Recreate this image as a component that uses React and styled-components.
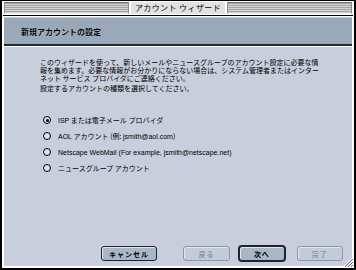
import React from 'react';
import styled, { createGlobalStyle } from 'styled-components';

const GlobalStyle = createGlobalStyle`
    body {
        margin: 0;
        background: #ffffff;
    }
`
const Window = styled.div`
    width: 356px;
    height: 270px;
    box-sizing: border-box;
    border: 2px solid #000000;
    border-top-width: 1px;
    background: #ffffff;
    display: flex;
    flex-direction: column;
    font-family: 'Noto Sans CJK JP', sans-serif;
    position: relative;
`
const TitleBar = styled.div`
    height: 14px;
    margin: 0 1px;
    border-bottom: 1px solid #000000;
    display: flex;
    align-items: center;
    justify-content: center;
    background: #ffffff;
`
const Stripes = styled.div`
    flex: 1;
    height: 10px;
    margin: 0 1px;
    background: repeating-linear-gradient(to bottom, #a4a4a4 0, #a4a4a4 1px, #d4d4d4 1px, #d4d4d4 2px);
    border: 1px solid #8c8c8c;
    border-top-color: #707070;
    border-bottom-color: #f0f0f0;
`
const TitleText = styled.span`
    font-size: 8px;
    line-height: 12px;
    color: #000000;
    background: #e2e2e2;
    padding: 0 4px;
    letter-spacing: 0.4px;
    border-left: 1px solid #ffffff;
    border-right: 1px solid #ffffff;
`
const Inner = styled.div`
    flex: 1;
    display: flex;
    flex-direction: column;
    margin: 1px;
    border: 1px solid #ffffff;
    border-top: none;
`
const Header = styled.div`
    height: 26px;
    background: #99a9ba;
    border-top: 1px solid #b9c9df;
    border-bottom: 2px solid #1f2b3a;
    display: flex;
    align-items: center;
    padding-left: 17px;
    font-size: 8px;
    font-weight: bold;
    color: #000000;
    text-shadow: 0 0 1px #d8e0ea;
`
const Content = styled.div`
    flex: 1;
    background: #c8cedc;
    border-top: 1px solid #ffffff;
    display: flex;
    flex-direction: column;
    padding: 11px 9px 5px 36px;
`
const Paragraph = styled.p`
    margin: ${({ gap }) => gap || 0}px 0 0 0;
    font-size: 7px;
    line-height: 8px;
    color: #000000;
    white-space: nowrap;
`
const RadioList = styled.div`
    margin-top: 20px;
    display: flex;
    flex-direction: column;
`
const RadioRow = styled.label`
    height: 16px;
    display: flex;
    align-items: center;
    font-size: 7px;
    color: #000000;
    white-space: nowrap;
`
const RadioCircle = styled.span`
    width: 8px;
    height: 8px;
    box-sizing: border-box;
    border: 1.5px solid #000000;
    border-radius: 50%;
    margin: 0 7px 0 3px;
    background: #dde2ec;
    display: flex;
    align-items: center;
    justify-content: center;
    &::after {
        content: '';
        width: 3px;
        height: 3px;
        border-radius: 50%;
        background: ${({ checked }) => checked ? '#000000' : 'transparent'};
    }
`
const Latin = styled.span`
    font-family: 'Liberation Sans', sans-serif;
`
const ButtonRow = styled.div`
    margin-top: auto;
    display: flex;
    align-items: center;
    padding-left: 61px;
`
const Button = styled.div`
    width: ${({ w }) => w}px;
    height: 13px;
    margin-left: ${({ ml }) => ml || 0}px;
    border: 1px solid ${({ disabled }) => disabled ? '#8c98a8' : '#1c2230'};
    box-shadow: ${({ primary }) => primary ? '0 0 0 1px #1c2230, inset 1px 1px 0 #dfe6f0' : 'inset 1px 1px 0 #e2e8f1'};
    border-radius: 3px;
    background: ${({ disabled }) => disabled ? '#c3cad8' : '#aab6c6'};
    color: ${({ disabled }) => disabled ? '#8e98a8' : '#000000'};
    font-size: 7px;
    font-weight: bold;
    display: flex;
    align-items: center;
    justify-content: center;
    letter-spacing: 1px;
`
const Grip = styled.svg`
    position: absolute;
    right: 1px;
    bottom: 1px;
`

function App() {
    return (
        <>
            <GlobalStyle />
            <Window>
                <TitleBar>
                    <Stripes />
                    <TitleText>アカウント ウィザード</TitleText>
                    <Stripes />
                </TitleBar>
                <Inner>
                    <Header>新規アカウントの設定</Header>
                    <Content>
                        <Paragraph>
                            このウィザードを使って、新しいメールやニュースグループのアカウント設定に必要な情<br />
                            報を集めます。必要な情報がお分かりにならない場合は、システム管理者またはインター<br />
                            ネット サービス プロバイダにご連絡ください。
                        </Paragraph>
                        <Paragraph gap={2}>設定するアカウントの種類を選択してください。</Paragraph>
                        <RadioList>
                            <RadioRow><RadioCircle checked /><Latin>ISP</Latin>&nbsp;または電子メール プロバイダ</RadioRow>
                            <RadioRow><RadioCircle /><Latin>AOL</Latin>&nbsp;アカウント (例:&nbsp;<Latin>jsmith@aol.com</Latin>)</RadioRow>
                            <RadioRow><RadioCircle /><Latin>Netscape WebMail (For example, jsmith@netscape.net)</Latin></RadioRow>
                            <RadioRow><RadioCircle />ニュースグループ アカウント</RadioRow>
                        </RadioList>
                        <ButtonRow>
                            <Button w={57}>キャンセル</Button>
                            <Button w={48} ml={26} disabled>戻る</Button>
                            <Button w={46} ml={9} primary>次へ</Button>
                            <Button w={47} ml={12} disabled>完了</Button>
                        </ButtonRow>
                    </Content>
                </Inner>
                <Grip width="10" height="10" viewBox="0 0 10 10">
                    <path d="M9 1 L1 9 M9 4 L4 9 M9 7 L7 9" stroke="#ffffff" strokeWidth="1" />
                    <path d="M10 2 L2 10 M10 5 L5 10 M10 8 L8 10" stroke="#6c7484" strokeWidth="1" />
                </Grip>
            </Window>
        </>
    );
}

export default App;
